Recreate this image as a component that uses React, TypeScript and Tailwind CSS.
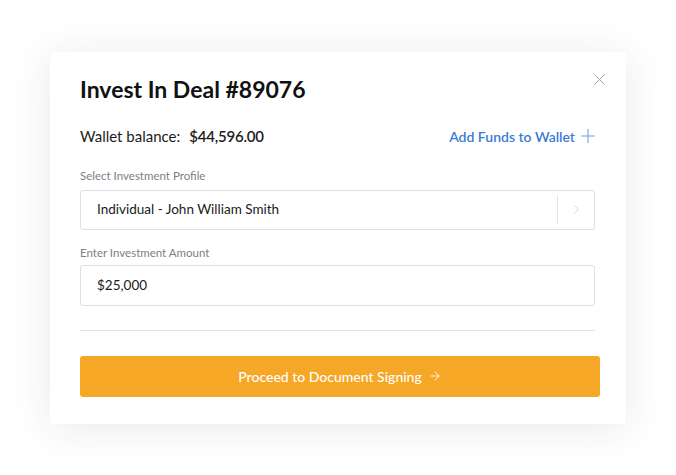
import { X, Plus, ChevronRight, ArrowRight } from 'lucide-react'

export default function App() {
  return (
    <div className="min-h-[475px] w-[676px] bg-white pl-[50px] pt-[52px] font-['Lato',sans-serif]">
      <div className="relative w-[576px] rounded-[4px] bg-white px-[30px] pb-[27px] pt-[22px] shadow-[0_4px_40px_rgba(30,40,60,0.10)]">
        {/* Close */}
        <button className="absolute right-[17px] top-[18px] text-[#9aa0a8]">
          <X className="h-[19px] w-[19px]" strokeWidth={1.2} />
        </button>

        <h1 className="text-[23px] font-bold leading-[30px] text-[#111]">Invest In Deal #89076</h1>

        {/* Wallet */}
        <div className="mt-[21px] flex items-center justify-between">
          <p className="text-[15px] text-[#1c1c1c]">
            Wallet balance:<span className="ml-[9px] font-semibold tracking-[-0.2px]">$44,596.00</span>
          </p>
          <a className="-mr-[3px] flex items-center gap-[2px] text-[14px] font-semibold text-[#3a7bd5]">
            Add Funds to Wallet
            <Plus className="h-[22px] w-[22px] text-[#6d9ce0]" strokeWidth={1.1} />
          </a>
        </div>

        {/* Profile */}
        <label className="mt-[20px] block text-[11.5px] leading-[16px] text-[#7b8088]">Select Investment Profile</label>
        <div className="mt-[6px] flex h-[40px] w-[515px] items-center rounded-[3px] border border-[#dcdfe4] pl-[16px]">
          <span className="flex-1 text-[13.5px] text-[#1a1a1a]">Individual - John William Smith</span>
          <div className="h-[29px] w-px bg-[#e2e5e9]" />
          <div className="flex w-[36px] justify-center">
            <ChevronRight className="h-[15px] w-[15px] text-[#c4c8ce]" strokeWidth={1.2} />
          </div>
        </div>

        {/* Amount */}
        <label className="mt-[15px] block text-[11.5px] leading-[16px] text-[#7b8088]">Enter Investment Amount</label>
        <div className="mt-[4px] flex h-[41px] w-[515px] items-center rounded-[3px] border border-[#dcdfe4] pl-[16px]">
          <span className="text-[13.5px] text-[#1a1a1a]">$25,000</span>
        </div>

        <div className="mt-[24px] h-px w-[515px] bg-[#d9e4eb]" />

        <button className="mt-[25px] flex h-[41px] w-[520px] items-center justify-center gap-[6px] rounded-[3px] bg-[#f5a725] text-[14px] font-medium text-white">
          Proceed to Document Signing
          <ArrowRight className="h-[14px] w-[14px]" strokeWidth={1.5} />
        </button>
      </div>
    </div>
  )
}
